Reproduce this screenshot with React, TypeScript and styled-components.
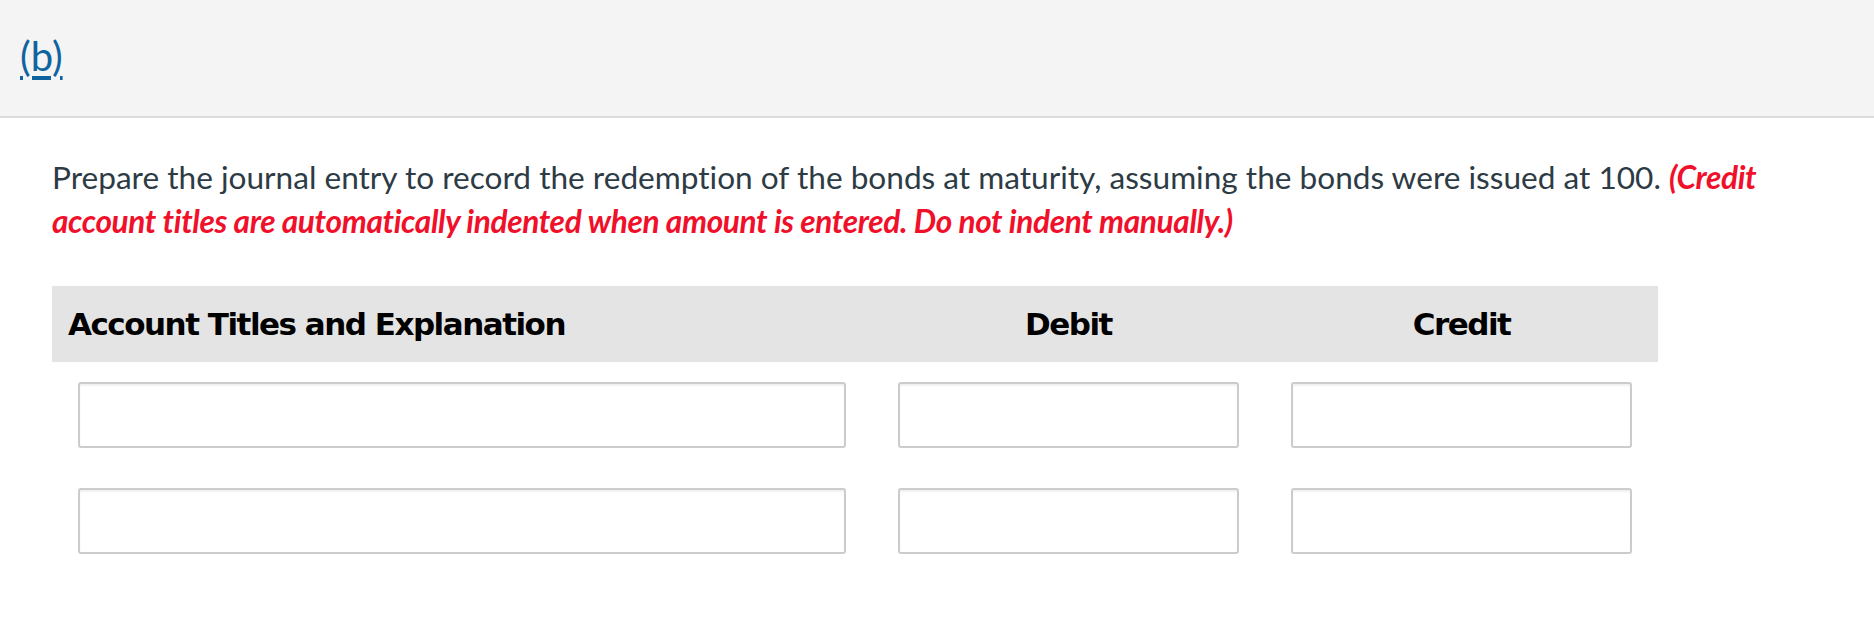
import React from 'react'
import styled, { createGlobalStyle } from 'styled-components'

const GlobalStyle = createGlobalStyle`
  body {
    margin: 0;
    background: #ffffff;
    font-family: Lato, "Open Sans", sans-serif;
  }
`

type Row = {
  id: number,
  account: string,
  debit: string,
  credit: string,
}

const rows: Row[] = [
  { id: 1, account: '', debit: '', credit: '' },
  { id: 2, account: '', debit: '', credit: '' },
]

const App: React.FC = () => {
  return <Page>
    <GlobalStyle />
    <PartBar>
      <PartLink href="#b">(b)</PartLink>
    </PartBar>
    <Content>
      <Prompt>
        Prepare the journal entry to record the redemption of the bonds at maturity, assuming the bonds were issued at 100.{' '}
        <Note>(Credit account titles are automatically indented when amount is entered. Do not indent manually.)</Note>
      </Prompt>
      <Journal>
        <HeadCell>Account Titles and Explanation</HeadCell>
        <HeadCell $center>Debit</HeadCell>
        <HeadCell $center>Credit</HeadCell>
        {rows.map((row) => <React.Fragment key={row.id}>
          <Cell><Field type="text" defaultValue={row.account} /></Cell>
          <Cell><Field type="text" defaultValue={row.debit} /></Cell>
          <Cell><Field type="text" defaultValue={row.credit} /></Cell>
        </React.Fragment>)}
      </Journal>
    </Content>
  </Page>
}

const Page = styled.div`
  width: 1874px;
  min-height: 628px;
  background: #ffffff;
`

const PartBar = styled.div`
  height: 118px;
  box-sizing: border-box;
  padding: 30px 0 0 20px;
  background: #f4f4f4;
  border-bottom: 2px solid #dcdcdc;
`

const PartLink = styled.a`
  font-family: Lato, sans-serif;
  font-size: 40px;
  line-height: 52px;
  color: #0f64a0;
  text-decoration: underline;
  text-decoration-thickness: 4px;
  text-underline-offset: 5px;
`

const Content = styled.div`
  padding: 37px 50px 0 52px;
`

const Prompt = styled.p`
  margin: 0;
  font-family: Lato, sans-serif;
  font-size: 31.6px;
  line-height: 44px;
  font-variant-ligatures: none;
  color: #2d3b45;
`

const Note = styled.span`
  color: #f0102a;
  font-weight: 700;
  font-style: italic;
  letter-spacing: -0.35px;
`

const Journal = styled.div`
  display: grid;
  grid-template-columns: 820px 393px 393px;
  margin-top: 43px;
`

const HeadCell = styled.div<{ $center?: boolean }>`
  height: 76px;
  display: flex;
  align-items: center;
  justify-content: ${(p) => (p.$center ? 'center' : 'flex-start')};
  padding-left: ${(p) => (p.$center ? '0' : '16px')};
  background: #e4e4e4;
  font-family: "DejaVu Sans", Verdana, sans-serif;
  font-weight: 700;
  font-size: 31px;
  letter-spacing: -1.5px;
  color: #000000;
`

const Cell = styled.div`
  padding: 20px 26px 20px 26px;
`

const Field = styled.input`
  display: block;
  width: 100%;
  height: 66px;
  box-sizing: border-box;
  border: 2px solid #cccccc;
  border-radius: 3px;
  box-shadow: inset 0 2px 2px rgba(0, 0, 0, 0.06);
  background: #ffffff;
  outline: none;
`

export default App
